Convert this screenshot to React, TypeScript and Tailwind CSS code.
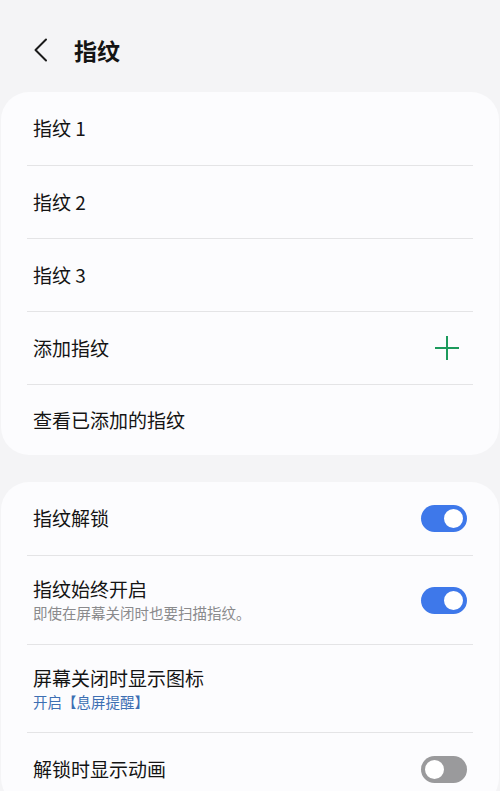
import React from "react";

const font = { fontFamily: '"Noto Sans CJK SC", "Noto Sans", sans-serif' };

function Toggle({ on }: { on: boolean }) {
  return on ? (
    <div className="w-[46px] h-[27px] rounded-full bg-[#3e78ea] flex items-center justify-end pr-[2px]">
      <div className="w-[23px] h-[23px] rounded-full bg-white border-[2px] border-[#3e78ea]" />
    </div>
  ) : (
    <div className="w-[46px] h-[27px] rounded-full bg-[#9a9a9c] flex items-center justify-start pl-[2px]">
      <div className="w-[23px] h-[23px] rounded-full bg-white border-[2px] border-[#9a9a9c]" />
    </div>
  );
}

function Divider() {
  return <div className="mx-[26px] h-px bg-[#e4e4e6]" />;
}

export default function App() {
  return (
    <div className="w-[500px] h-[791px] overflow-hidden bg-[#f4f4f6] text-[#141414]" style={font}>
      {/* header */}
      <div className="h-[92px] flex items-center pl-[33px] pt-[8px]">
        <svg width="16" height="24" viewBox="0 0 16 24" fill="none" className="shrink-0">
          <path d="M13 1.5 L2.5 12 L13 22.5" stroke="#1a1a1a" strokeWidth="2" strokeLinecap="round" strokeLinejoin="round" />
        </svg>
        <div className="ml-[25px] text-[23px] font-bold leading-none">指纹</div>
      </div>

      {/* card 1 */}
      <div className="mx-[1px] rounded-[28px] bg-[#fcfcfe]">
        <div className="h-[73px] flex items-center px-[32px] text-[19px]">指纹 1</div>
        <Divider />
        <div className="h-[72px] flex items-center px-[32px] text-[19px]">指纹 2</div>
        <Divider />
        <div className="h-[72px] flex items-center px-[32px] text-[19px]">指纹 3</div>
        <Divider />
        <div className="h-[72px] flex items-center justify-between pl-[32px] pr-[39px] text-[19px]">
          <span>添加指纹</span>
          <svg width="26" height="26" viewBox="0 0 26 26">
            <path d="M13 1 V25 M1 13 H25" stroke="#1c9a5c" strokeWidth="2" />
          </svg>
        </div>
        <Divider />
        <div className="h-[70px] flex items-center px-[32px] text-[19px]">查看已添加的指纹</div>
      </div>

      {/* card 2 */}
      <div className="mx-[1px] mt-[27px] rounded-[28px] bg-[#fcfcfe]">
        <div className="h-[73px] flex items-center justify-between pl-[32px] pr-[32px]">
          <span className="text-[19px]">指纹解锁</span>
          <Toggle on />
        </div>
        <Divider />
        <div className="h-[88px] flex items-center justify-between pl-[32px] pr-[32px]">
          <div className="flex flex-col">
            <span className="text-[19px] leading-[26px]">指纹始终开启</span>
            <span className="text-[14.5px] leading-[22px] text-[#8a8a8c]">即使在屏幕关闭时也要扫描指纹。</span>
          </div>
          <Toggle on />
        </div>
        <Divider />
        <div className="h-[87px] flex items-center pl-[32px] pr-[32px]">
          <div className="flex flex-col">
            <span className="text-[19px] leading-[26px]">屏幕关闭时显示图标</span>
            <span className="text-[14.5px] leading-[22px] text-[#3d6fb3]">开启【息屏提醒】</span>
          </div>
        </div>
        <Divider />
        <div className="h-[73px] flex items-center justify-between pl-[32px] pr-[32px]">
          <span className="text-[19px]">解锁时显示动画</span>
          <Toggle on={false} />
        </div>
      </div>
    </div>
  );
}
